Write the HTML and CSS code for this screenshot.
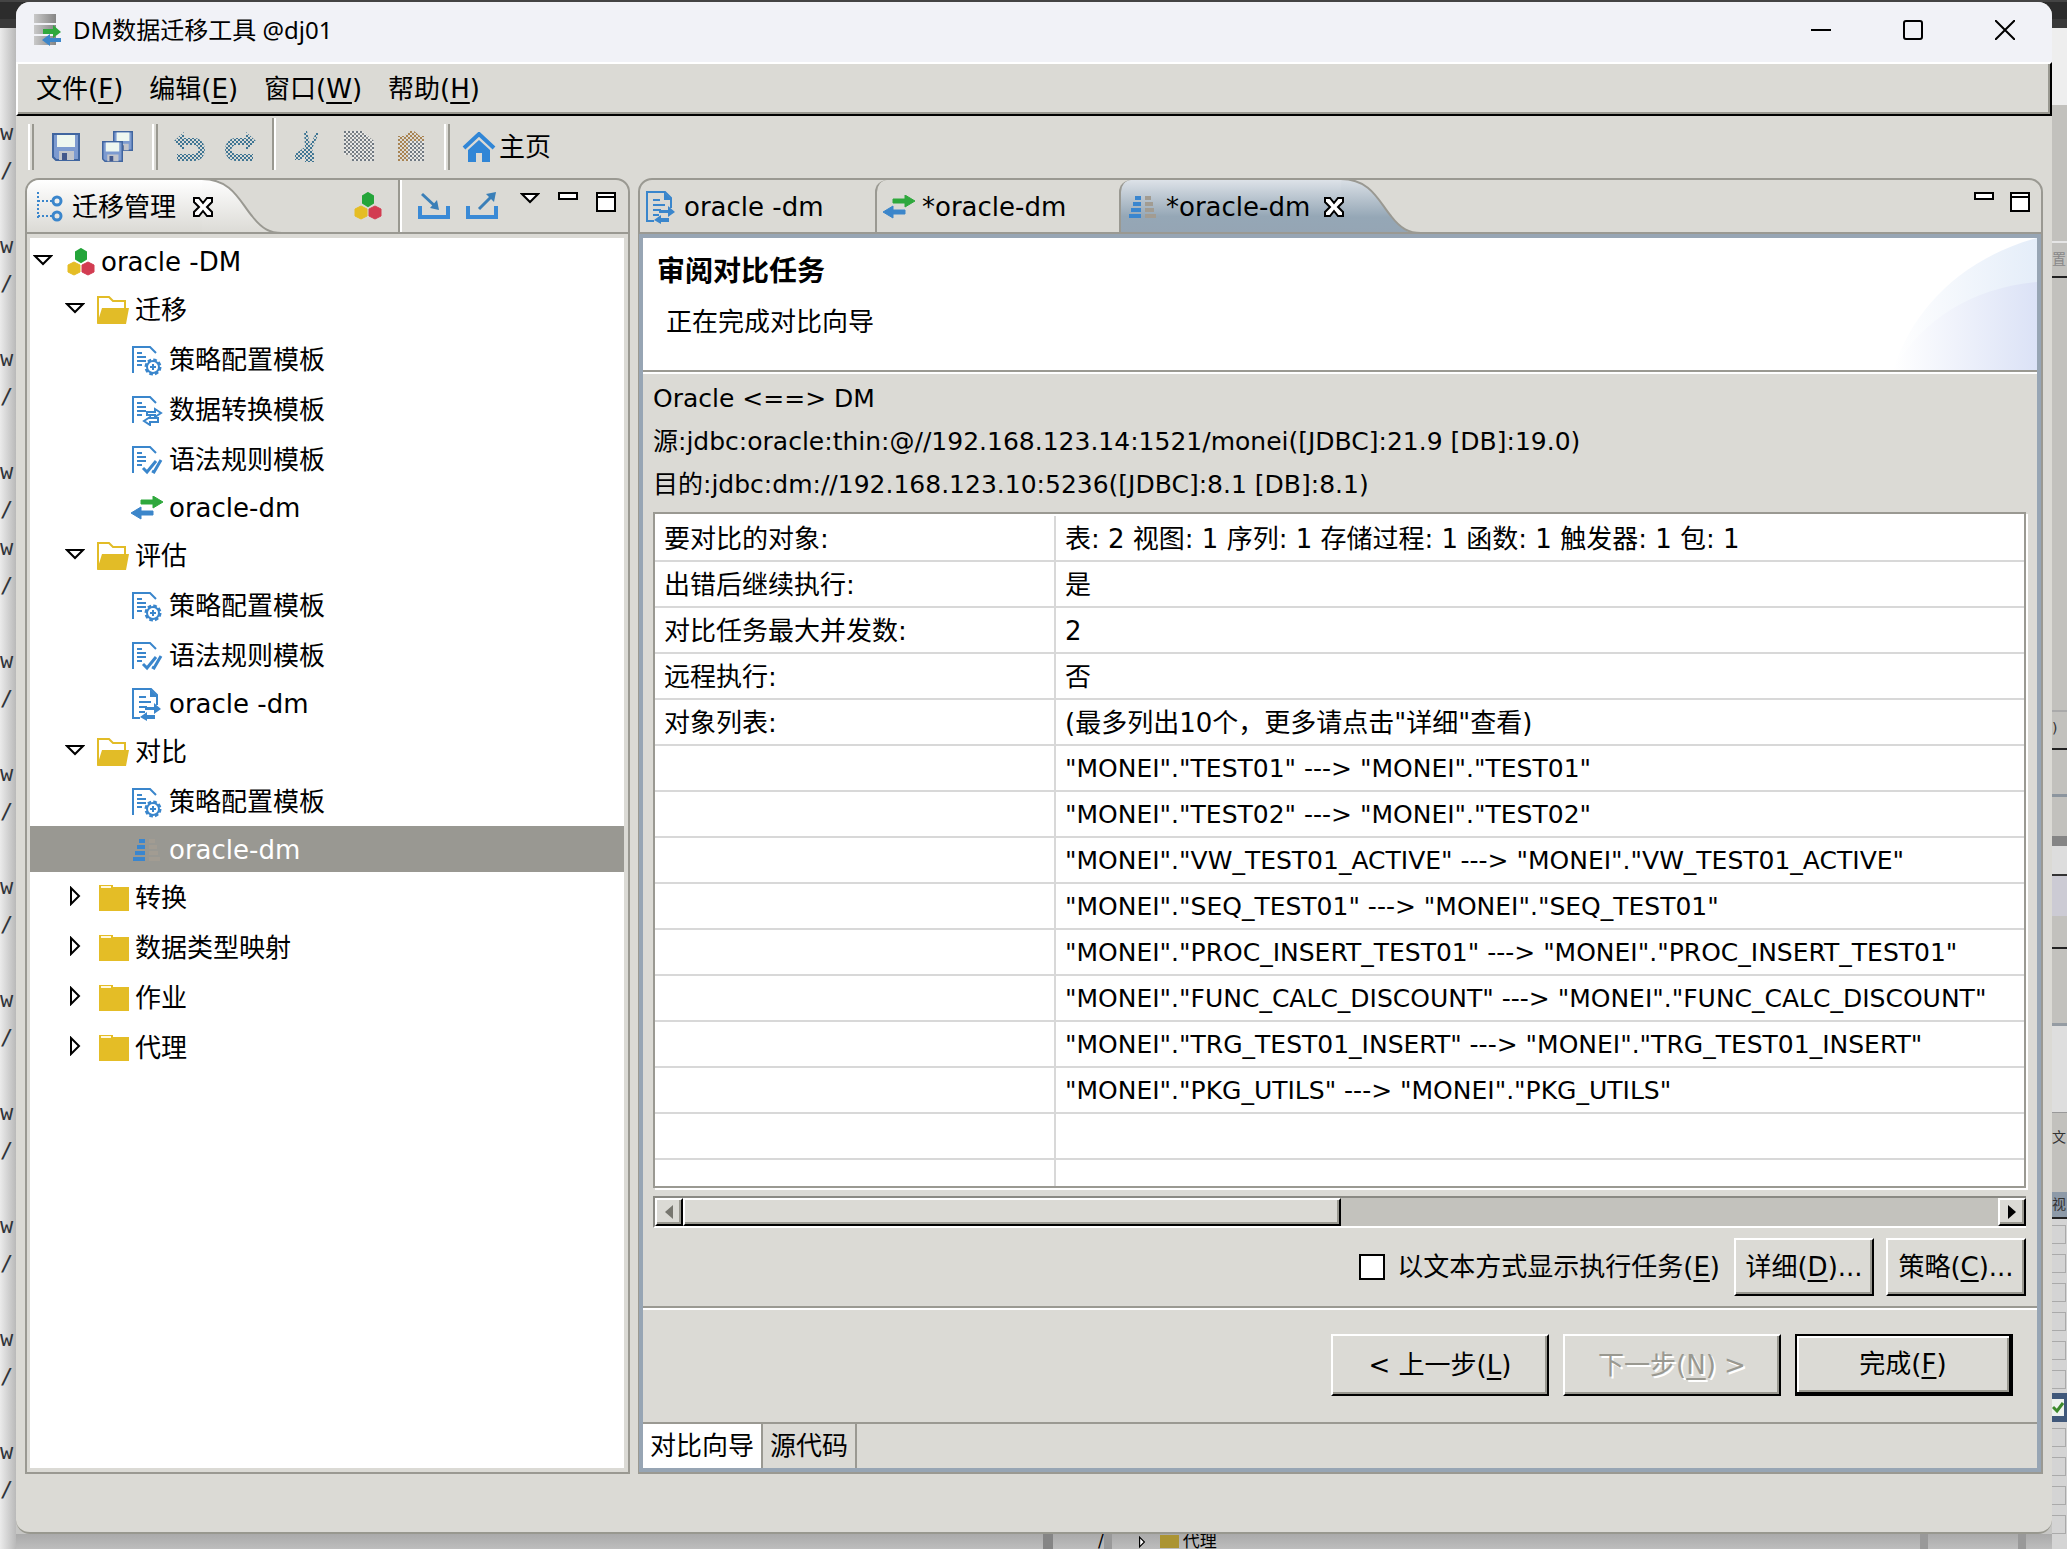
FILE: index.html
```html
<!DOCTYPE html>
<html lang="zh-CN">
<head>
    <meta charset="UTF-8">
    <meta name="viewport" content="width=device-width, initial-scale=1.0">
    <title>DM数据迁移工具</title>
    <link rel="stylesheet" href="styles.css">
</head>
<body>
    <!-- Icon definitions -->
    <svg class="defs" width="0" height="0" aria-hidden="true">
        <defs>
            <pattern id="dots-blue" width="4" height="4" patternUnits="userSpaceOnUse">
                <path d="M0 0h2v2H0zM2 2h2v2H2z" fill="#3f7593"/>
            </pattern>
            <pattern id="dots-grey" width="4" height="4" patternUnits="userSpaceOnUse">
                <path d="M0 0h2v2H0z" fill="#6e7780"/><path d="M2 2h2v2H2z" fill="#8b8f90"/><path d="M2 0h2v2H2zM0 2h2v2H0z" fill="#e8e8e6"/>
            </pattern>
            <pattern id="dots-tan" width="4" height="4" patternUnits="userSpaceOnUse">
                <path d="M0 0h2v2H0zM2 2h2v2H2z" fill="#a88352"/>
            </pattern>
            <linearGradient id="steel" x1="0" x2="1">
                <stop offset="0" stop-color="#c9c9c9"/>
                <stop offset="1" stop-color="#858585"/>
            </linearGradient>
            <linearGradient id="tab-light" x1="0" x2="0" y1="0" y2="1">
                <stop offset="0" stop-color="#ffffff"/>
                <stop offset="1" stop-color="#dbdad5"/>
            </linearGradient>
            <linearGradient id="tab-blue" x1="0" x2="0" y1="0" y2="1">
                <stop offset="0" stop-color="#dde2e8"/>
                <stop offset="0.7" stop-color="#95a7b6"/>
                <stop offset="1" stop-color="#95a5b4"/>
            </linearGradient>
            <linearGradient id="swoosh" x1="0" x2="1">
                <stop offset="0" stop-color="#ffffff"/>
                <stop offset="1" stop-color="#dbe2f6"/>
            </linearGradient>
            <linearGradient id="swoosh-light" x1="0" x2="1">
                <stop offset="0" stop-color="#ffffff"/>
                <stop offset="1" stop-color="#e4edf9"/>
            </linearGradient>
        </defs>
        <symbol id="i-down" viewBox="0 0 20 12">
            <path d="M2 2h16l-8 8z" fill="#fff" stroke="#000" stroke-width="2"/>
        </symbol>
        <symbol id="i-right" viewBox="0 0 12 20">
            <path d="M2 2v16l8-8z" fill="#fff" stroke="#000" stroke-width="2"/>
        </symbol>
        <symbol id="i-cluster" viewBox="0 0 28 28">
            <path d="M14 1l5 3v7l-5 3-5-3V4z" fill="#24a53a" stroke="#24a53a" stroke-width="2"/>
            <path d="M7 14l6 3v7l-6 3-6-3v-7z" fill="#e5bd25" stroke="#e5bd25"/>
            <path d="M21 14l6 3v7l-6 3-6-3v-7z" fill="#d23c51" stroke="#d23c51"/>
        </symbol>
        <symbol id="i-open" viewBox="0 0 32 30">
            <path d="M1 28V2h11l4 4h12v7" fill="none" stroke="#e2bc27" stroke-width="2"/>
            <path d="M5 13h27l-3 16H0z" fill="#e2bc27"/>
        </symbol>
        <symbol id="i-closed" viewBox="0 0 32 30">
            <path d="M2 2h14v2h16v24H2z" fill="#e4bd26"/>
            <path d="M4 4h10" stroke="#fff8dd" stroke-width="2"/>
        </symbol>
        <symbol id="i-doc" viewBox="0 0 32 32">
            <path d="M2 29V3h17l6 6M6 9h5M6 13h9M6 17h9M6 21h5" fill="none" stroke="#3a86cc" stroke-width="2"/>
        </symbol>
        <symbol id="i-gear" viewBox="0 0 32 32">
            <use href="#i-doc"/>
            <circle cx="22" cy="23" r="7" fill="none" stroke="#3a86cc" stroke-width="3" stroke-dasharray="3.5 2"/>
            <circle cx="22" cy="23" r="6" fill="#fff" stroke="#3a86cc" stroke-width="2"/>
            <path d="M22 20v6M19 23h6" stroke="#3a86cc" stroke-width="2"/>
        </symbol>
        <symbol id="i-swapdoc" viewBox="0 0 32 32">
            <use href="#i-doc"/>
            <path d="M16 21v-3h8v-3l6 4-6 4v-2zM27 24v4h-8v3l-6-4 6-4v1z" fill="#fff" stroke="#3a86cc" stroke-width="2"/>
        </symbol>
        <symbol id="i-check" viewBox="0 0 32 32">
            <use href="#i-doc"/>
            <path d="M12 24l4 4 9-11M21 27l2 1 7-12" fill="none" stroke="#3a86cc" stroke-width="3"/>
        </symbol>
        <symbol id="i-eval" viewBox="0 0 32 34">
            <path d="M9 31H2V2h18l6 6v10M8 10h7M8 15h12M8 20h8M8 25h6" fill="none" stroke="#3a86cc" stroke-width="2"/>
            <path d="M19 2l8 8h-8zM14 20h9v-4l7 6-7 5v-4h-9zM24 28v4h-8v2l-7-4 7-5v3z" fill="#3a86cc"/>
        </symbol>
        <symbol id="i-transfer" viewBox="0 0 32 24">
            <path d="M10 4h12V0l10 6-10 6V8H10z" fill="#2fa83d" stroke="#2fa83d"/>
            <path d="M22 15H10v-4L0 17l10 6v-4h12z" fill="#3c86ca" stroke="#3c86ca"/>
        </symbol>
        <symbol id="i-compare" viewBox="0 0 32 26">
            <path d="M8 2h6v4H8zM6 8h8v4H6zM4 14h10v4H4zM2 20h12v4H2z" fill="#3a86cf"/>
            <path d="M18 2h6v4h-6zM18 8h8v4h-8zM18 14h9v4h-9zM18 20h11v4H18z" fill="#a29c92"/>
        </symbol>
        <symbol id="i-disk" viewBox="0 0 28 28">
            <path d="M1 1h26v26H4l-3-3z" fill="#7d9bd0" stroke="#40659f" stroke-width="2"/>
            <path d="M5 2h18v12H5z" fill="#eef7f0"/>
            <path d="M7 18h15v9H7z" fill="#c2c5cb"/>
            <path d="M10 20h5v7h-5z" fill="#42588c"/>
        </symbol>
        <symbol id="i-undo" viewBox="0 0 32 32">
            <path d="M10 1v6h10c14 0 15 23 0 23H3v-7h17c6 0 6-9 0-9H10v6L0 10z" fill="url(#dots-blue)"/>
        </symbol>
        <symbol id="i-x" viewBox="0 0 22 22">
            <path d="M2 2h5l4 5 4-5h5v4l-5 5 5 5v4h-5l-4-5-4 5H2v-4l5-5-5-5z" fill="#fff" stroke="#000" stroke-width="2"/>
        </symbol>
        <symbol id="i-min" viewBox="0 0 20 20">
            <path d="M1 1h18v6H1z" fill="#fff" stroke="#000" stroke-width="2"/>
        </symbol>
        <symbol id="i-max" viewBox="0 0 20 20">
            <path d="M1 1h18v18H1zM1 5h18" fill="#fff" stroke="#000" stroke-width="2"/>
        </symbol>
    </svg>

    <!-- Windows lying behind the main one -->
    <div class="backdrop" aria-hidden="true">
        <div class="back-top"></div>
        <div class="back-code">
            <p>w<br>/</p><p>w<br>/</p><p>w<br>/</p><p class="tight">w<br>/</p>
            <p>w<br>/</p><p>w<br>/</p><p>w<br>/</p><p>w<br>/</p><p>w<br>/</p>
            <p>w<br>/</p><p>w<br>/</p><p>w<br>/</p><p>w<br>/</p>
        </div>
        <div class="back-right">
            <div class="strip strip-page"></div>
            <div class="strip strip-tools"></div>
            <div class="strip strip-label">置</div>
            <div class="strip strip-panel"></div>
            <div class="strip strip-paren">)</div>
            <div class="strip strip-bars"></div>
            <div class="strip strip-dark"></div>
            <div class="strip strip-white"></div>
            <div class="strip strip-lilac"></div>
            <div class="strip strip-row"></div>
            <div class="strip strip-row tall"></div>
            <div class="strip strip-blank"></div>
            <div class="strip strip-word">文</div>
            <div class="strip strip-head">视</div>
            <div class="cell"></div><div class="cell"></div><div class="cell"></div>
            <div class="cell"></div><div class="cell"></div><div class="cell"></div>
            <div class="cell picked"><svg width="12" height="17"><path d="M1 8l4 4 6-8" fill="none" stroke="#3d8a2c" stroke-width="3"/></svg></div>
            <div class="cell"></div><div class="cell"></div><div class="cell"></div><div class="cell"></div>
        </div>
        <div class="back-bottom">
            <span class="bar"></span>
            <span class="slash">/</span>
            <span class="bar thin"></span>
            <svg width="8" height="12" viewBox="0 0 12 20"><use href="#i-right"/></svg>
            <span class="mini-folder"></span>
            <span>代理</span>
            <span class="bar thin last"></span>
            <span class="bar thin"></span>
        </div>
    </div>

    <div class="window">
        <header class="titlebar">
            <svg width="28" height="32" viewBox="0 0 28 32">
                <path d="M0 0h22v9H0zM0 11h22v9H0zM0 22h22v9H0z" fill="url(#steel)"/>
                <path d="M9 15h10v-4l8 7-8 6v-4H9z" fill="#2fa83d"/>
                <path d="M27 24H16v-4l-8 6 8 6v-4h11z" fill="#3c86ca"/>
            </svg>
            <h1>DM数据迁移工具 @dj01</h1>
            <div class="caption-buttons">
                <button aria-label="最小化"><svg width="20" height="20"><path d="M0 10h20" stroke="#000" stroke-width="2"/></svg></button>
                <button aria-label="最大化"><svg width="20" height="20"><rect x="1" y="1" width="18" height="18" rx="2" fill="none" stroke="#000" stroke-width="2"/></svg></button>
                <button aria-label="关闭"><svg width="20" height="20"><path d="M0 0l20 20M20 0L0 20" stroke="#000" stroke-width="2"/></svg></button>
            </div>
        </header>

        <nav class="menubar">
            <button>文件(<u>F</u>)</button>
            <button>编辑(<u>E</u>)</button>
            <button>窗口(<u>W</u>)</button>
            <button>帮助(<u>H</u>)</button>
        </nav>

        <div class="toolbar">
            <span class="grip"></span>
            <div class="tools">
                <button aria-label="保存"><svg width="28" height="28"><use href="#i-disk"/></svg></button>
                <button aria-label="全部保存"><svg width="32" height="32" viewBox="0 0 32 32"><use href="#i-disk" x="11" width="20" height="20"/><use href="#i-disk" y="10" width="21" height="21"/></svg></button>
            </div>
            <span class="grip"></span>
            <div class="tools history">
                <button aria-label="撤销" disabled><svg width="32" height="32"><use href="#i-undo"/></svg></button>
                <button aria-label="重做" disabled><svg class="flip" width="32" height="32"><use href="#i-undo"/></svg></button>
            </div>
            <span class="divider"></span>
            <div class="tools clipboard">
                <button aria-label="剪切" disabled><svg width="26" height="32" viewBox="0 0 26 32"><path d="M10 0h3l3 14 6-12h3l-7 16 2 5v8h-9v-7l-4 5H1v-6l10-7z" fill="url(#dots-blue)"/></svg></button>
                <button aria-label="复制" disabled><svg width="30" height="32" viewBox="0 0 30 32"><path d="M0 0h18l12 10v20H8V24H0z" fill="url(#dots-grey)"/></svg></button>
                <button aria-label="粘贴" disabled><svg width="28" height="32" viewBox="0 0 28 32"><path d="M0 5h6l6-5h4l6 5h4v5H10v20H0z" fill="url(#dots-tan)"/><path d="M10 10h16v20H10z" fill="url(#dots-grey)"/></svg></button>
            </div>
            <span class="grip"></span>
            <button class="home"><svg width="34" height="30" viewBox="0 0 34 30"><path d="M2 16L17 2l15 14" fill="none" stroke="#3186d6" stroke-width="4"/><path d="M17 8l11 10v12h-8v-9h-6v9H6V18z" fill="#3186d6"/></svg>主页</button>
        </div>

        <main class="workbench">
            <!-- Migration tree -->
            <section class="view">
                <div class="tabs">
                    <div class="view-tab">
                        <svg width="28" height="30" viewBox="0 0 28 30">
                            <path d="M2 0v26M2 9h14M2 24h14" stroke="#3a86cc" stroke-width="2" stroke-dasharray="2 2"/>
                            <circle cx="21" cy="9" r="4" fill="none" stroke="#3a86cc" stroke-width="3"/>
                            <circle cx="21" cy="24" r="4" fill="none" stroke="#3a86cc" stroke-width="3"/>
                        </svg>
                        <span>迁移管理</span>
                        <button aria-label="关闭视图"><svg width="22" height="22"><use href="#i-x"/></svg></button>
                    </div>
                    <svg class="curve" width="80" height="56" viewBox="0 0 80 56">
                        <path d="M0 0C30 0 38 24 50 38C60 51 68 56 80 56H0z" fill="url(#tab-light)"/>
                        <path d="M0 1C30 1 38 24 50 38C60 51 68 55 80 55" fill="none" stroke="#9a9992" stroke-width="2"/>
                    </svg>
                    <div class="view-tools">
                        <button aria-label="新建"><svg width="28" height="28"><use href="#i-cluster"/></svg></button>
                        <span class="rule"></span>
                        <button aria-label="导入"><svg width="32" height="28" viewBox="0 0 32 28"><path d="M2 14v11h28V14" fill="none" stroke="#3a8ad6" stroke-width="4"/><path d="M4 2l14 13" stroke="#3a7fb8" stroke-width="3"/><path d="M21 18l-9-2 7-8z" fill="#3a7fb8"/></svg></button>
                        <button aria-label="导出"><svg width="32" height="28" viewBox="0 0 32 28"><path d="M2 14v11h28V14" fill="none" stroke="#3a8ad6" stroke-width="4"/><path d="M13 17L26 4" stroke="#3a7fb8" stroke-width="3"/><path d="M30 0l-2 10-8-8z" fill="#3a7fb8"/></svg></button>
                    </div>
                    <div class="pane-buttons">
                        <button aria-label="菜单"><svg width="20" height="12"><use href="#i-down"/></svg></button>
                        <button aria-label="最小化"><svg width="20" height="20"><use href="#i-min"/></svg></button>
                        <button aria-label="最大化"><svg width="20" height="20"><use href="#i-max"/></svg></button>
                    </div>
                </div>
                <ul class="tree">
                    <li class="latin"><svg class="arrow" width="20" height="12"><use href="#i-down"/></svg><svg width="28" height="28"><use href="#i-cluster"/></svg>oracle -DM</li>
                    <li class="l2"><svg class="arrow" width="20" height="12"><use href="#i-down"/></svg><svg width="32" height="30"><use href="#i-open"/></svg>迁移</li>
                    <li class="l3"><svg width="32" height="32"><use href="#i-gear"/></svg>策略配置模板</li>
                    <li class="l3"><svg width="32" height="32"><use href="#i-swapdoc"/></svg>数据转换模板</li>
                    <li class="l3"><svg width="32" height="32"><use href="#i-check"/></svg>语法规则模板</li>
                    <li class="l3 latin"><svg width="32" height="24"><use href="#i-transfer"/></svg>oracle-dm</li>
                    <li class="l2"><svg class="arrow" width="20" height="12"><use href="#i-down"/></svg><svg width="32" height="30"><use href="#i-open"/></svg>评估</li>
                    <li class="l3"><svg width="32" height="32"><use href="#i-gear"/></svg>策略配置模板</li>
                    <li class="l3"><svg width="32" height="32"><use href="#i-check"/></svg>语法规则模板</li>
                    <li class="l3 latin"><svg width="32" height="34"><use href="#i-eval"/></svg>oracle -dm</li>
                    <li class="l2"><svg class="arrow" width="20" height="12"><use href="#i-down"/></svg><svg width="32" height="30"><use href="#i-open"/></svg>对比</li>
                    <li class="l3"><svg width="32" height="32"><use href="#i-gear"/></svg>策略配置模板</li>
                    <li class="l3 latin selected"><svg width="32" height="26"><use href="#i-compare"/></svg>oracle-dm</li>
                    <li class="l2"><svg class="arrow" width="20" height="20"><use href="#i-right"/></svg><svg width="32" height="30"><use href="#i-closed"/></svg>转换</li>
                    <li class="l2"><svg class="arrow" width="20" height="20"><use href="#i-right"/></svg><svg width="32" height="30"><use href="#i-closed"/></svg>数据类型映射</li>
                    <li class="l2"><svg class="arrow" width="20" height="20"><use href="#i-right"/></svg><svg width="32" height="30"><use href="#i-closed"/></svg>作业</li>
                    <li class="l2"><svg class="arrow" width="20" height="20"><use href="#i-right"/></svg><svg width="32" height="30"><use href="#i-closed"/></svg>代理</li>
                </ul>
            </section>

            <!-- Compare wizard -->
            <section class="editor">
                <div class="tabs">
                    <button class="editor-tab first"><svg width="32" height="34"><use href="#i-eval"/></svg>oracle -dm</button>
                    <button class="editor-tab"><svg width="32" height="24"><use href="#i-transfer"/></svg>*oracle-dm</button>
                    <div class="editor-tab active">
                        <svg width="32" height="26"><use href="#i-compare"/></svg>*oracle-dm
                        <button aria-label="关闭"><svg width="22" height="22"><use href="#i-x"/></svg></button>
                    </div>
                    <svg class="curve" width="80" height="56" viewBox="0 0 80 56">
                        <path d="M0 0C30 0 38 24 50 38C60 51 68 56 80 56H0z" fill="url(#tab-blue)"/>
                        <path d="M0 1C30 1 38 24 50 38C60 51 68 55 80 55" fill="none" stroke="#9a9992" stroke-width="2"/>
                    </svg>
                    <div class="pane-buttons">
                        <button aria-label="最小化"><svg width="20" height="20"><use href="#i-min"/></svg></button>
                        <button aria-label="最大化"><svg width="20" height="20"><use href="#i-max"/></svg></button>
                    </div>
                </div>
                <div class="editor-body">
                    <div class="banner">
                        <div>
                            <h2>审阅对比任务</h2>
                            <p>正在完成对比向导</p>
                        </div>
                        <svg width="144" height="132" viewBox="0 0 144 132">
                            <path d="M0 132C20 70 70 20 144 0v132z" fill="url(#swoosh-light)"/>
                            <path d="M0 132C30 80 80 50 144 44v88z" fill="url(#swoosh)"/>
                        </svg>
                    </div>
                    <div class="page">
                        <div class="summary">
                            <p>Oracle &lt;==&gt; DM</p>
                            <p>源:jdbc:oracle:thin:@//192.168.123.14:1521/monei([JDBC]:21.9 [DB]:19.0)</p>
                            <p>目的:jdbc:dm://192.168.123.10:5236([JDBC]:8.1 [DB]:8.1)</p>
                        </div>
                        <div class="grid">
                            <table>
                                <tbody>
                                    <tr class="setting"><td>要对比的对象:</td><td>表: 2 视图: 1 序列: 1 存储过程: 1 函数: 1 触发器: 1 包: 1</td></tr>
                                    <tr class="setting"><td>出错后继续执行:</td><td>是</td></tr>
                                    <tr class="setting"><td>对比任务最大并发数:</td><td>2</td></tr>
                                    <tr class="setting"><td>远程执行:</td><td>否</td></tr>
                                    <tr class="setting"><td>对象列表:</td><td>(最多列出10个，更多请点击"详细"查看)</td></tr>
                                    <tr><td></td><td>"MONEI"."TEST01" ---&gt; "MONEI"."TEST01"</td></tr>
                                    <tr><td></td><td>"MONEI"."TEST02" ---&gt; "MONEI"."TEST02"</td></tr>
                                    <tr><td></td><td>"MONEI"."VW_TEST01_ACTIVE" ---&gt; "MONEI"."VW_TEST01_ACTIVE"</td></tr>
                                    <tr><td></td><td>"MONEI"."SEQ_TEST01" ---&gt; "MONEI"."SEQ_TEST01"</td></tr>
                                    <tr><td></td><td>"MONEI"."PROC_INSERT_TEST01" ---&gt; "MONEI"."PROC_INSERT_TEST01"</td></tr>
                                    <tr><td></td><td>"MONEI"."FUNC_CALC_DISCOUNT" ---&gt; "MONEI"."FUNC_CALC_DISCOUNT"</td></tr>
                                    <tr><td></td><td>"MONEI"."TRG_TEST01_INSERT" ---&gt; "MONEI"."TRG_TEST01_INSERT"</td></tr>
                                    <tr><td></td><td>"MONEI"."PKG_UTILS" ---&gt; "MONEI"."PKG_UTILS"</td></tr>
                                    <tr><td></td><td></td></tr>
                                    <tr><td></td><td></td></tr>
                                </tbody>
                            </table>
                        </div>
                        <div class="scrollbar">
                            <button aria-label="向左滚动" disabled><svg width="8" height="14"><path d="M8 0v14L0 7z" fill="#77766f"/></svg></button>
                            <div class="track"><div class="thumb"></div></div>
                            <button aria-label="向右滚动"><svg width="8" height="14"><path d="M0 0v14l8-7z" fill="#000"/></svg></button>
                        </div>
                        <div class="options">
                            <input type="checkbox" id="as-text">
                            <label for="as-text">以文本方式显示执行任务(<u>E</u>)</label>
                            <button class="btn">详细(<u>D</u>)...</button>
                            <button class="btn">策略(<u>C</u>)...</button>
                        </div>
                    </div>
                    <div class="wizard-buttons">
                        <button class="btn">&lt; 上一步(<u>L</u>)</button>
                        <button class="btn" disabled>下一步(<u>N</u>) &gt;</button>
                        <button class="btn default">完成(<u>F</u>)</button>
                    </div>
                    <div class="page-tabs">
                        <button class="active">对比向导</button>
                        <button>源代码</button>
                    </div>
                </div>
            </section>
        </main>
    </div>
</body>
</html>
```

FILE: styles.css
```css
/* Basic Reset */
* {
    box-sizing: border-box;
    margin: 0;
    padding: 0;
}

body {
    position: relative;
    height: 100vh;
    overflow: hidden;
    padding: 2px 15px 15px 16px;
    background-color: #c6c6c4;
    font-family: "DejaVu Sans", "Noto Sans CJK SC", sans-serif;
    font-size: 26px;
    line-height: 32px;
    color: #000;
}

button {
    border: none;
    background: none;
    font: inherit;
    color: inherit;
}

svg {
    display: block;
    flex-shrink: 0;
}

u {
    text-underline-offset: 4px;
    text-decoration-thickness: 2px;
}

.defs {
    position: absolute;
}

/* Windows behind */
.backdrop {
    position: absolute;
    inset: 0;
}

.back-top {
    height: 28px;
    background-color: #2c2c2c;
    border-top: 2px solid #444;
    border-bottom: 9px solid #393939;
}

.back-code {
    position: absolute;
    top: 28px;
    left: 0;
    bottom: 0;
    width: 16px;
    padding-top: 86px;
    overflow: hidden;
    background: linear-gradient(to right, #ebebeb, #b9b9b9);
    font-family: "DejaVu Sans Mono", monospace;
    font-size: 22px;
    line-height: 38px;
    color: #30343a;
}

.back-code p {
    height: 113px;
}

.back-code .tight {
    height: 76px;
}

.back-right {
    position: absolute;
    top: 28px;
    right: 0;
    bottom: 0;
    width: 15px;
    overflow: hidden;
    background-color: #d4d4d4;
    font-size: 14px;
    line-height: 32px;
    color: #333;
}

.strip {
    background-color: #c2c1bd;
}

.strip-page { height: 77px; background-color: #eeeeee; }
.strip-tools { height: 136px; }
.strip-label { height: 37px; border-top: 2px solid #e5e5e5; border-bottom: 2px solid #222; color: #888; }
.strip-panel { height: 434px; border-bottom: 2px solid #aaa; }
.strip-paren { height: 38px; border-bottom: 2px solid #222; }
.strip-bars { height: 86px; background: linear-gradient(#c2c1bd 44px, #8c959e 44px, #8c959e 47px, #c2c1bd 47px); }
.strip-dark { height: 10px; background-color: #858585; }
.strip-white { height: 30px; background-color: #dddddd; border-bottom: 2px solid #333; }
.strip-lilac { height: 40px; background-color: #cccbd4; }
.strip-row { height: 33px; border-bottom: 2px solid #222; }
.strip-row.tall { height: 77px; border-bottom: 3px solid #959ca3; }
.strip-blank { height: 86px; background-color: #dedede; }
.strip-word { height: 80px; padding-top: 8px; border-top: 1px solid #999; }
.strip-head { height: 27px; line-height: 24px; background-color: #8d9aa8; border-bottom: 2px solid #222; }

.cell {
    height: 29px;
    padding: 6px 1px 6px 0;
}

.cell::before {
    content: "";
    display: block;
    height: 17px;
    border: 1px solid #aaa;
    border-left: none;
}

.cell.picked {
    background-color: #40587a;
}

.cell.picked::before {
    display: none;
}

.cell.picked svg {
    background-color: #eef2ee;
}

.back-bottom {
    position: absolute;
    left: 16px;
    right: 15px;
    bottom: 0;
    height: 15px;
    display: flex;
    align-items: center;
    overflow: hidden;
    padding-left: 1027px;
    background: linear-gradient(#aaaaaa, #bdbdbd);
    font-size: 17px;
    line-height: 15px;
}

.back-bottom .bar {
    width: 10px;
    height: 15px;
    background-color: #858585;
}

.back-bottom .slash {
    margin-left: 45px;
}

.back-bottom .thin {
    width: 8px;
    margin-right: 26px;
    background-color: #999;
}

.back-bottom .last {
    margin-left: auto;
    margin-right: 90px;
}

.mini-folder {
    width: 19px;
    height: 13px;
    margin: 0 4px 0 14px;
    background-color: #ab9433;
}

/* Main window */
.window {
    position: relative;
    height: 100%;
    display: flex;
    flex-direction: column;
    overflow: hidden;
    border-bottom: 2px solid #98988f;
    border-radius: 14px;
    background-color: #dbdad5;
}

.titlebar {
    display: flex;
    align-items: center;
    gap: 11px;
    height: 60px;
    padding: 0 37px 4px 18px;
    background-color: #f1f2f7;
}

.titlebar h1 {
    font-family: "Noto Sans", "Noto Sans CJK SC", sans-serif;
    font-size: 24px;
    font-weight: 400;
}

.caption-buttons {
    display: flex;
    gap: 72px;
    margin-left: auto;
}

.menubar {
    display: flex;
    gap: 26px;
    height: 54px;
    padding-left: 18px;
    border: 2px solid;
    border-color: #fff #000 #000 #fff;
    box-shadow: inset -2px -2px #999890;
}

.toolbar {
    display: flex;
    align-items: center;
    height: 62px;
    padding-left: 12px;
}

.grip {
    width: 6px;
    height: 46px;
    border: solid;
    border-width: 0 2px;
    border-color: #fff #999890 #999890 #fff;
}

.divider {
    width: 4px;
    height: 52px;
    margin-bottom: 6px;
    border-left: 2px solid #999890;
    border-right: 2px solid #fff;
}

.tools {
    display: flex;
    align-items: center;
    gap: 22px;
    padding: 0 18px;
}

.history {
    gap: 18px;
    padding: 0 16px;
}

.clipboard {
    gap: 24px;
}

.flip {
    transform: scaleX(-1);
}

.home {
    display: flex;
    align-items: center;
    gap: 3px;
    margin-left: 12px;
}

.workbench {
    flex: 1;
    display: grid;
    grid-template-columns: 121fr 281fr;
    gap: 8px;
    min-height: 0;
    padding: 0 9px 58px 9px;
}

/* Tab strips */
.tabs {
    display: flex;
    flex-shrink: 0;
    height: 56px;
    border: 2px solid #9a9992;
    border-radius: 14px 14px 0 0;
    overflow: hidden;
}

.curve {
    margin-top: -2px;
}

.pane-buttons {
    display: flex;
    align-items: flex-start;
    gap: 16px;
    margin-left: auto;
    padding: 12px 12px 0 0;
}

.view,
.editor {
    display: flex;
    flex-direction: column;
    min-width: 0;
    min-height: 0;
}

.view-tab {
    position: relative;
    z-index: 1;
    display: flex;
    align-items: center;
    gap: 8px;
    width: 175px;
    padding: 2px 0 0 9px;
    background: linear-gradient(#fff, #dbdad5);
    white-space: nowrap;
}

.view-tab button {
    margin-left: 8px;
}

.view-tools {
    display: flex;
    align-items: center;
    gap: 16px;
    margin-left: auto;
}

.rule {
    width: 4px;
    height: 52px;
    border-left: 2px solid #999890;
    border-right: 2px solid #fff;
}

.view .pane-buttons {
    gap: 18px;
    margin-left: 22px;
}

/* Tree */
.tree {
    flex: 1;
    overflow: hidden;
    list-style: none;
    background-color: #fff;
    border: solid #9a9992;
    border-width: 0 2px 2px;
    box-shadow: inset 3px 4px #dbdad5, inset -4px -4px #dbdad5;
    padding-top: 4px;
}

.tree li {
    display: flex;
    align-items: center;
    gap: 6px;
    height: 50px;
    padding: 2px 0 0 6px;
}

.tree .arrow {
    margin: 0 8px 4px 0;
}

.tree .latin {
    height: 46px;
}

.tree .l2 {
    padding-left: 38px;
}

.tree .l2 .arrow {
    margin-right: 6px;
}

.tree .l3 {
    padding-left: 104px;
}

.tree .selected {
    margin: 0 4px 0 3px;
    padding-left: 101px;
    background-color: #999892;
    color: #fff;
}

/* Editor */
.editor-tab {
    display: flex;
    align-items: center;
    gap: 7px;
    width: 244px;
    padding: 2px 0 0 6px;
    border-left: 2px solid #9a9992;
    border-radius: 12px 0 0 0;
    white-space: nowrap;
}

.editor-tab.first {
    width: 235px;
    border-left: none;
    padding-left: 5px;
}

.editor-tab.active {
    position: relative;
    z-index: 1;
    width: 222px;
    background: linear-gradient(#dde2e8, #95a7b6 70%, #95a5b4);
}

.editor-tab.active button {
    margin-left: 6px;
}

.editor .pane-buttons {
    padding-right: 11px;
}

.editor-body {
    flex: 1;
    display: flex;
    flex-direction: column;
    min-height: 0;
    padding: 4px;
    border: solid #9a9992;
    border-width: 0 2px 2px 1px;
    background-color: #97a5b4;
}

.banner {
    display: flex;
    justify-content: space-between;
    height: 136px;
    padding-left: 14px;
    background-color: #fff;
    border-bottom: 2px solid #fff;
    box-shadow: inset 0 -2px #9a9992;
}

.banner h2 {
    padding-top: 16px;
    font-size: 28px;
    line-height: 36px;
}

.banner p {
    padding: 16px 0 0 9px;
}

.page {
    flex: 1;
    display: flex;
    flex-direction: column;
    min-height: 0;
    padding: 3px 11px 10px 10px;
    background-color: #dbdad5;
}

.summary p {
    font-size: 25px;
    line-height: 43px;
    white-space: nowrap;
}

.grid {
    flex: 1;
    min-height: 0;
    margin-top: 6px;
    overflow: hidden;
    background-color: #fff;
    border: 2px solid #9a9992;
    box-shadow: 2px 2px #fff;
}

table {
    width: 100%;
    table-layout: fixed;
    border-collapse: separate;
    border-spacing: 0;
    border-top: 2px solid #fff;
}

td {
    height: 46px;
    padding: 2px 0 0 9px;
    border-bottom: 2px solid #d8d8d8;
    font-size: 25px;
    line-height: 32px;
    white-space: nowrap;
    overflow: hidden;
}

.setting td {
    font-size: 26px;
}

td:first-child {
    width: 401px;
    border-right: 2px solid #d8d8d8;
}

.scrollbar {
    display: flex;
    height: 32px;
    margin-top: 8px;
    border-top: 2px solid #8a8983;
    border-left: 2px solid #8a8983;
    border-bottom: 2px solid #fff;
    background-color: #c3c2bd;
}

.scrollbar button,
.thumb {
    width: 28px;
    border: 2px solid;
    border-color: #fff #000 #000 #fff;
    box-shadow: inset -2px -2px #999890;
    background-color: #dbdad5;
}

.scrollbar button {
    display: flex;
    align-items: center;
    justify-content: center;
}

.track {
    flex: 1;
    display: flex;
}

.thumb {
    width: 50%;
}

.options {
    display: flex;
    align-items: center;
    justify-content: flex-end;
    height: 58px;
    margin-top: 10px;
}

.options input {
    appearance: none;
    width: 26px;
    height: 26px;
    margin-right: 12px;
    border: 2px solid #000;
    background-color: #fff;
}

.options .btn {
    width: 140px;
    height: 58px;
    margin-left: 12px;
}

.options label {
    margin-right: 2px;
}

.btn {
    border: 2px solid;
    border-color: #fff #000 #000 #fff;
    box-shadow: inset -2px -2px #999890;
    white-space: nowrap;
}

.btn:disabled {
    color: #999890;
    text-shadow: 2px 2px #fff;
}

.btn.default {
    border-color: #000;
    border-width: 2px 4px 4px 2px;
    box-shadow: inset 2px 2px #fff, inset -2px -2px #999890;
}

.wizard-buttons {
    display: flex;
    justify-content: flex-end;
    gap: 14px;
    padding: 26px 24px;
    border-top: 2px solid #9a9992;
    border-bottom: 2px solid #9a9992;
    background-color: #dbdad5;
    box-shadow: inset 0 2px #fff;
}

.wizard-buttons .btn {
    width: 218px;
    height: 62px;
}

.page-tabs {
    display: flex;
    height: 44px;
    background-color: #dbdad5;
}

.page-tabs button {
    padding: 0 7px;
    border-right: 2px solid #9a9992;
}

.page-tabs .active {
    background-color: #fff;
}
```
